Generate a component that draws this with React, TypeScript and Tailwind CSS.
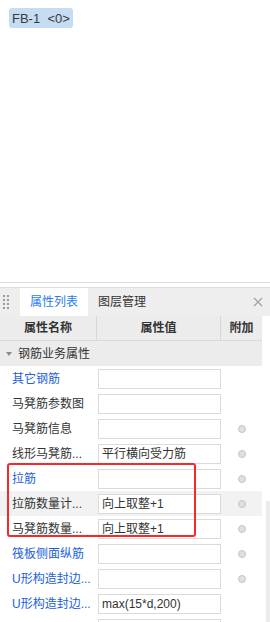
import React from 'react'

type Row = {
  label: string
  value?: string
  blue?: boolean
  dot?: boolean
  hover?: boolean
}

const rows: Row[] = [
  { label: '其它钢筋', blue: true },
  { label: '马凳筋参数图' },
  { label: '马凳筋信息', dot: true },
  { label: '线形马凳筋...', value: '平行横向受力筋', dot: true },
  { label: '拉筋', blue: true, dot: true },
  { label: '拉筋数量计...', value: '向上取整+1', dot: true, hover: true },
  { label: '马凳筋数量...', value: '向上取整+1', dot: true },
  { label: '筏板侧面纵筋', blue: true, dot: true },
  { label: 'U形构造封边...', blue: true, dot: true },
  { label: 'U形构造封边...', value: 'max(15*d,200)', blue: true },
  { label: '', value: '' },
]

function GripDots() {
  return (
    <div className="grid grid-cols-2 gap-x-[2px] gap-y-[1.7px] w-[6px]">
      {Array.from({ length: 8 }).map((_, i) => (
        <div key={i} className="w-[2px] h-[2px] bg-[#9a9a9a]" />
      ))}
    </div>
  )
}

function App() {
  return (
    <div
      className="w-[270px] h-[622px] bg-white flex flex-col overflow-hidden text-[12px] text-[#333]"
      style={{ fontFamily: '"Liberation Sans", "Noto Sans CJK SC", sans-serif' }}
    >
      {/* canvas area */}
      <div className="h-[282px] shrink-0 pt-[8px] pl-[9px]">
        <div className="inline-flex items-center h-[20px] px-[3px] rounded-[3px] bg-[#c6dcf2] text-[#3a3a3a] text-[13px] leading-none whitespace-pre">
          {'FB-1  <0>'}
        </div>
      </div>
      <div className="h-px shrink-0 bg-[#dcdcdc]" />
      <div className="h-[4px] shrink-0" />

      {/* tab bar */}
      <div className="h-[29px] shrink-0 border-t border-[#dcdcdc] bg-[#eeeeee] flex items-stretch">
        <div className="w-[20px] flex items-center pl-[3px]">
          <GripDots />
        </div>
        <div className="w-[68px] bg-white flex items-center justify-center text-[#2b7cf0]">属性列表</div>
        <div className="px-[10px] flex items-center text-[#333]">图层管理</div>
        <div className="ml-auto w-[24px] flex items-center justify-center">
          <svg width="10" height="10" viewBox="0 0 10 10">
            <path d="M1 1L9 9M9 1L1 9" stroke="#a0a0a0" strokeWidth="1.2" />
          </svg>
        </div>
      </div>

      {/* property grid */}
      <div className="flex flex-1 shrink-0">
        <div className="w-[262px] relative">
          <div className="h-[25px] flex bg-[#ececec] border-b border-[#dadada] font-bold">
            <div className="w-[97px] flex items-center justify-center border-r border-[#d6d6d6]">属性名称</div>
            <div className="w-[124px] flex items-center justify-center border-r border-[#d6d6d6]">属性值</div>
            <div className="flex-1 flex items-center justify-center">附加</div>
          </div>
          <div className="h-[25px] flex items-center bg-[#ececec]">
            <div className="w-[18px] flex justify-center">
              <div className="w-0 h-0 border-l-[3px] border-r-[3px] border-t-[4px] border-l-transparent border-r-transparent border-t-[#8a8a8a]" />
            </div>
            <span>钢筋业务属性</span>
          </div>
          {rows.map((r, i) => (
            <div key={i} className={`h-[25px] flex items-center ${r.hover ? 'bg-[#f2f2f2]' : ''}`}>
              <div className={`w-[97px] pl-[12px] whitespace-nowrap ${r.blue ? 'text-[#2160dc]' : 'text-[#333]'}`}>
                {r.label}
              </div>
              <div className="w-[124px] pl-[1px]">
                <div className="h-[20px] w-[123px] border border-[#dadada] bg-white flex items-center px-[3px] whitespace-nowrap">
                  {r.value}
                </div>
              </div>
              <div className="flex-1 flex justify-center">
                {r.dot && <div className="w-[8px] h-[8px] rounded-full bg-[#e0e0e0] border border-[#c4c4c4]" />}
              </div>
            </div>
          ))}
          <div className="absolute left-[7px] top-[147px] w-[189px] h-[74px] border-2 border-[#f42a2a] rounded-[3px]" />
        </div>
        <div className="flex-1 flex flex-col">
          <div className="h-[185px]" />
          <div className="flex-1 ml-auto w-[4px] bg-[#ebebeb]" />
        </div>
      </div>
    </div>
  )
}

export default App
